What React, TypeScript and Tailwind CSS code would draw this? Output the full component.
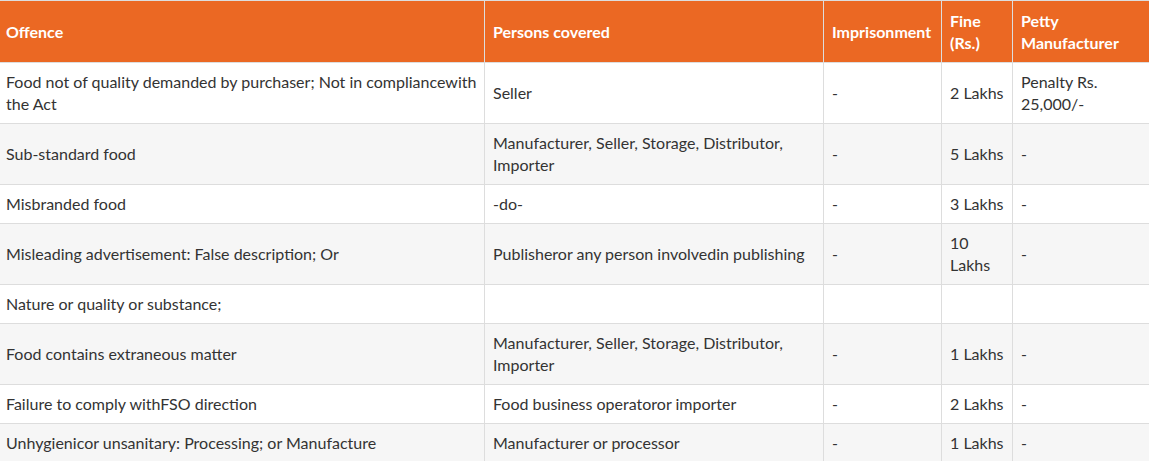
const HEADERS = ['Offence', 'Persons covered', 'Imprisonment', 'Fine (Rs.)', 'Petty Manufacturer'];

type Row = [string, string, string, string, string];

const ROWS: Row[] = [
  ['Food not of quality demanded by purchaser; Not in compliancewith the Act', 'Seller', '-', '2 Lakhs', 'Penalty Rs. 25,000/-'],
  ['Sub-standard food', 'Manufacturer, Seller, Storage, Distributor, Importer', '-', '5 Lakhs', '-'],
  ['Misbranded food', '-do-', '-', '3 Lakhs', '-'],
  ['Misleading advertisement: False description; Or', 'Publisheror any person involvedin publishing', '-', '10 Lakhs', '-'],
  ['Nature or quality or substance;', '', '', '', ''],
  ['Food contains extraneous matter', 'Manufacturer, Seller, Storage, Distributor, Importer', '-', '1 Lakhs', '-'],
  ['Failure to comply withFSO direction', 'Food business operatoror importer', '-', '2 Lakhs', '-'],
  ['Unhygienicor unsanitary: Processing; or Manufacture', 'Manufacturer or processor', '-', '1 Lakhs', '-'],
];

export default function App() {
  return (
    <div className="w-[1149px] h-[461px] overflow-hidden bg-white font-['Lato','Noto_Sans',sans-serif]">
      <table className="table-fixed border-collapse ml-[-3px] w-[1160px] text-[16px] leading-[22px] text-[#333]">
        <colgroup>
          <col className="w-[487px]" />
          <col className="w-[339px]" />
          <col className="w-[118px]" />
          <col className="w-[71px]" />
          <col />
        </colgroup>
        <thead>
          <tr className="bg-[#eb6823] text-white">
            {HEADERS.map((h) => (
              <th
                key={h}
                className="border border-[#dddddd] px-[8px] py-[8px] h-[62px] text-left align-middle font-bold"
              >
                {h}
              </th>
            ))}
          </tr>
        </thead>
        <tbody>
          {ROWS.map((row, i) => (
            <tr key={i} className={i % 2 === 1 ? 'bg-[#f6f6f6]' : 'bg-white'}>
              {row.map((cell, j) => (
                <td
                  key={j}
                  className={
                    j === 0
                      ? 'border border-[#dddddd] pl-[8px] pr-[2px] py-[8px] align-middle'
                      : 'border border-[#dddddd] px-[8px] py-[8px] align-middle'
                  }
                >
                  {cell}
                </td>
              ))}
            </tr>
          ))}
        </tbody>
      </table>
    </div>
  );
}
